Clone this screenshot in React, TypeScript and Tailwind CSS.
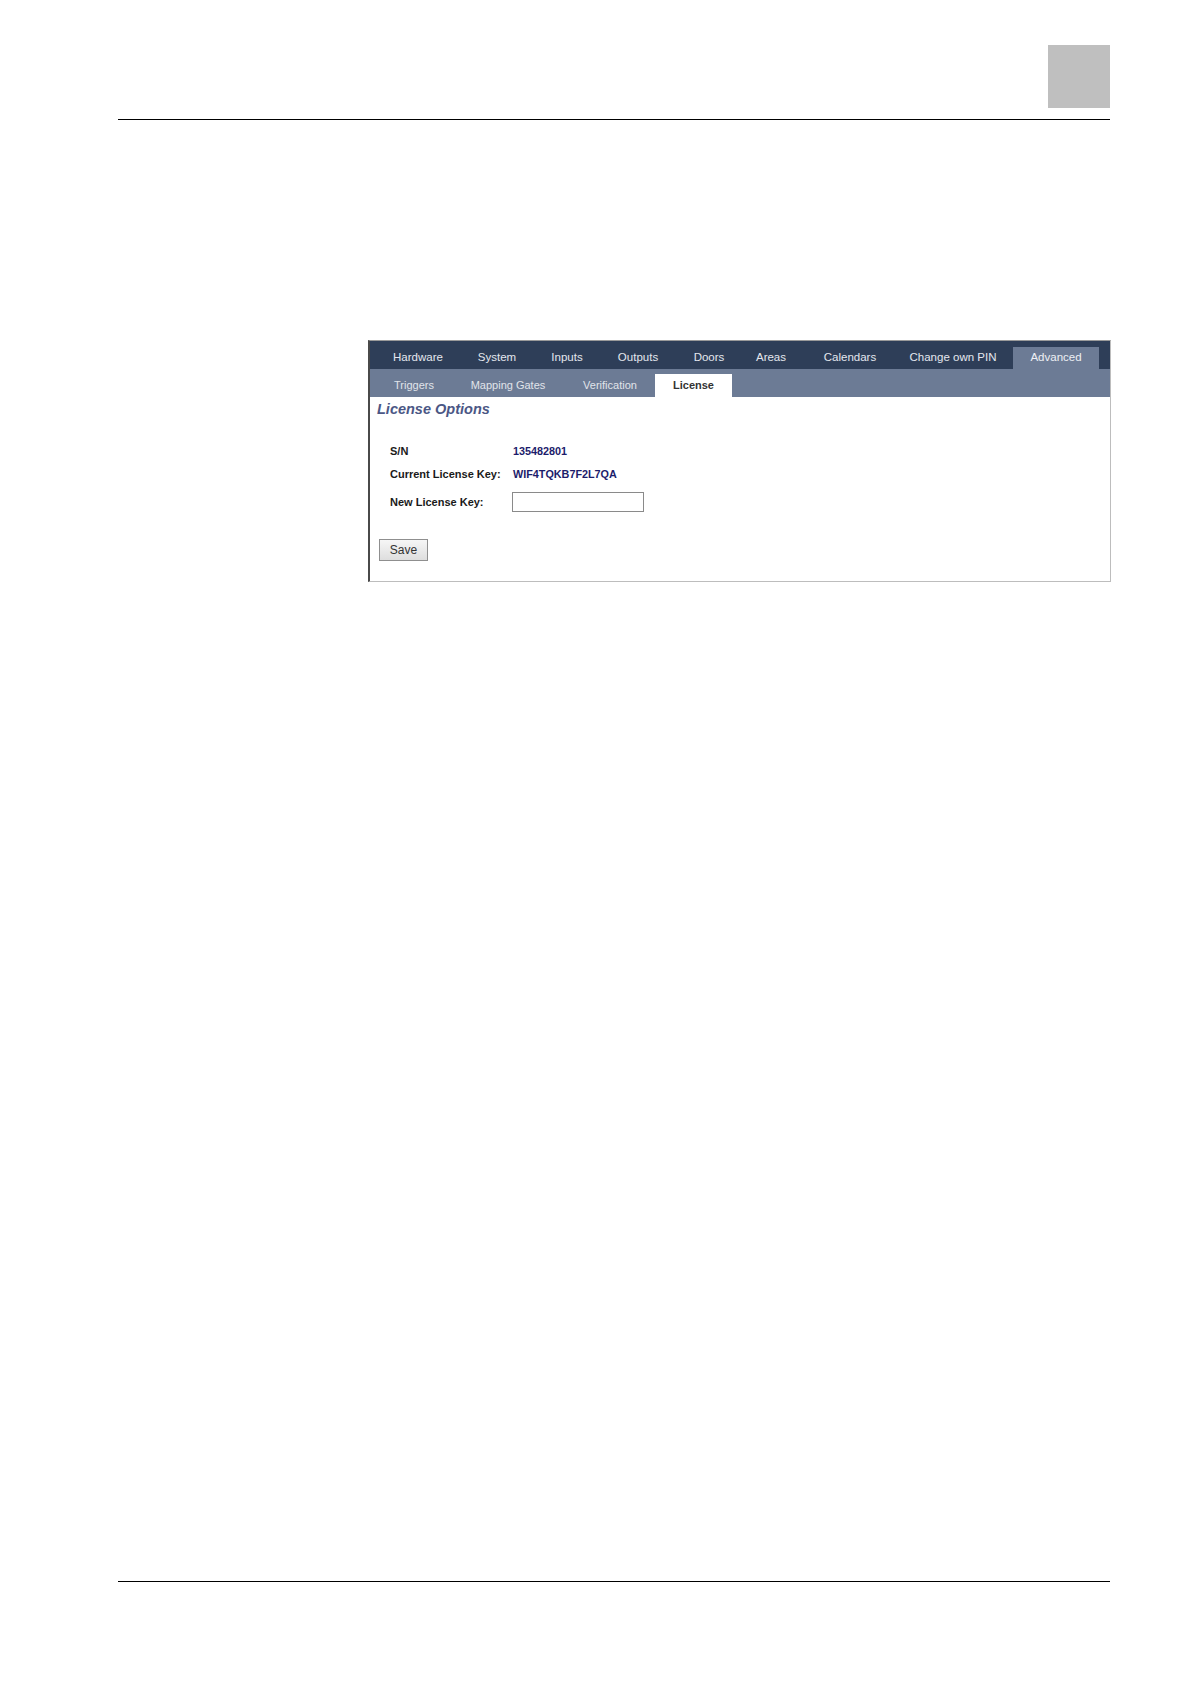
const mainTabs = [
  { label: "Hardware", w: "w-[70px]" },
  { label: "System", w: "w-[88px]" },
  { label: "Inputs", w: "w-[52px]" },
  { label: "Outputs", w: "w-[90px]" },
  { label: "Doors", w: "w-[52px]" },
  { label: "Areas", w: "w-[72px]" },
  { label: "Calendars", w: "w-[86px]" },
  { label: "Change own PIN", w: "w-[120px]" },
  { label: "Advanced", w: "w-[86px]", active: true },
];

const subTabs = [
  { label: "Triggers", w: "w-[74px]" },
  { label: "Mapping Gates", w: "w-[114px]" },
  { label: "Verification", w: "w-[90px]" },
  { label: "License", w: "w-[77px]", active: true },
];

export default function App() {
  return (
    <div className="w-[1191px] h-[1684px] bg-white flex flex-col pl-[118px] pr-[81px] pb-[102px] font-['Liberation_Sans',Arial,sans-serif]">
      {/* Page header */}
      <div className="pt-[45px] flex flex-col">
        <div className="self-end w-[62px] h-[63px] bg-[#bfbfbf]" />
        <div className="mt-[11px] h-px bg-black" />
      </div>

      {/* Screenshot panel */}
      <div className="mt-[220px] ml-[250px] w-[743px] border-t border-t-[#9a9a9a] border-l-2 border-l-[#4a4a4a] border-r border-r-[#bdbdbd] border-b border-b-[#bdbdbd]">
        {/* Main nav */}
        <div className="h-[28px] bg-[#2e3e58] flex items-end pl-[13px]">
          {mainTabs.map((t) => (
            <div
              key={t.label}
              className={`${t.w} h-[22px] flex items-center justify-center text-[11.5px] whitespace-nowrap ${
                t.active ? "bg-[#6c7b95] text-[#eef0f4]" : "text-[#e4e7ee]"
              }`}
            >
              {t.label}
            </div>
          ))}
        </div>

        {/* Sub nav */}
        <div className="h-[28px] bg-[#6c7b95] flex items-end pl-[7px]">
          {subTabs.map((t) => (
            <div
              key={t.label}
              className={`${t.w} h-[23px] flex items-center justify-center text-[11px] whitespace-nowrap ${
                t.active ? "bg-white text-[#333] font-bold" : "text-[#e0e4ea]"
              }`}
            >
              {t.label}
            </div>
          ))}
        </div>

        {/* Content */}
        <div className="pl-[7px] pb-[20px]">
          <h2 className="mt-[4px] h-[17px] leading-[17px] text-[14.5px] font-bold italic text-[#4b5785]">
            License Options
          </h2>

          <div className="mt-[22px] pl-[13px] flex flex-col text-[11px]">
            <div className="h-[22px] flex items-center">
              <span className="w-[123px] font-bold text-[#1a1a1a]">S/N</span>
              <span className="font-bold text-[10.8px] text-[#1c1c6b]">135482801</span>
            </div>
            <div className="h-[24px] flex items-center">
              <span className="w-[123px] font-bold text-[#1a1a1a]">Current License Key:</span>
              <span className="font-bold text-[10.8px] text-[#1c1c6b]">WIF4TQKB7F2L7QA</span>
            </div>
            <div className="mt-[6px] h-[20px] flex items-center">
              <span className="w-[122px] font-bold text-[#1a1a1a]">New License Key:</span>
              <input
                type="text"
                className="w-[132px] h-[20px] border border-[#8a8a8a] bg-white outline-none"
              />
            </div>
          </div>

          <button className="mt-[27px] ml-[2px] w-[49px] h-[22px] border border-[#8f8f8f] bg-gradient-to-b from-[#f6f6f6] to-[#dedede] text-[12px] text-[#333]">
            Save
          </button>
        </div>
      </div>

      {/* Page footer */}
      <div className="mt-auto h-px bg-black" />
    </div>
  );
}
